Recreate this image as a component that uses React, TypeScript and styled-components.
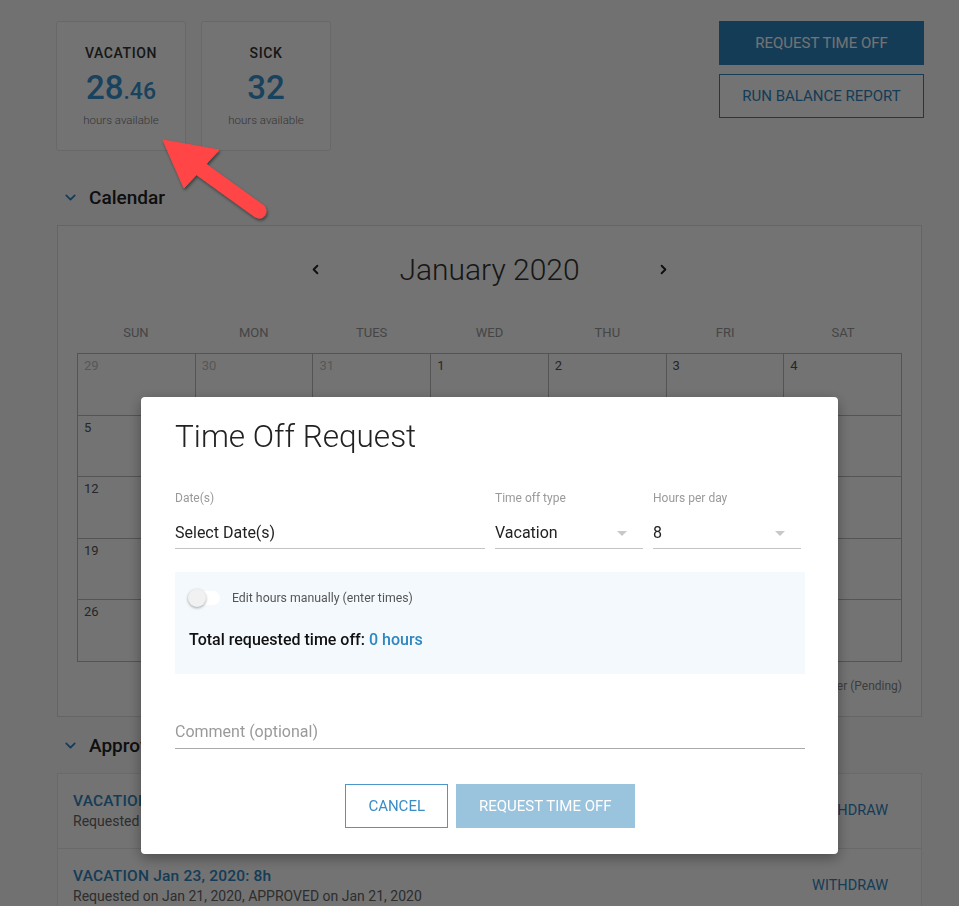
import React from "react";
import styled, { createGlobalStyle } from "styled-components";
import { ChevronDown, ChevronLeft, ChevronRight } from "lucide-react";

const PRIMARY = "#2f86c0";

const GlobalStyle = createGlobalStyle`
  body {
    margin: 0;
    background: #fafafa;
    font-family: Roboto, "Liberation Sans", Arial, sans-serif;
    color: #333;
  }
  * { box-sizing: border-box; }
`;

const Balances = [
  { id: 1, label: "Vacation", whole: "28", frac: ".46" },
  { id: 2, label: "Sick", whole: "32", frac: "" },
];

const DayNames = ["Sun", "Mon", "Tues", "Wed", "Thu", "Fri", "Sat"];

const Weeks = [
  [
    { n: 29, muted: true },
    { n: 30, muted: true },
    { n: 31, muted: true },
    { n: 1 },
    { n: 2 },
    { n: 3 },
    { n: 4 },
  ],
  [5, 6, 7, 8, 9, 10, 11].map((n) => ({ n })),
  [12, 13, 14, 15, 16, 17, 18].map((n) => ({ n })),
  [19, 20, 21, 22, 23, 24, 25].map((n) => ({ n })),
  [26, 27, 28, 29, 30, 31, 1].map((n, i) => ({ n, muted: i === 6 })),
];

const Approved = [
  {
    id: 1,
    title: "VACATION Jan 24, 2020: 8h",
    sub: "Requested on Jan 21, 2020, APPROVED on Jan 21, 2020",
  },
  {
    id: 2,
    title: "VACATION Jan 23, 2020: 8h",
    sub: "Requested on Jan 21, 2020, APPROVED on Jan 21, 2020",
  },
];

function App() {
  return (
    <>
      <GlobalStyle />
      <StPage>
        <StTopRow>
          <StCards>
            {Balances.map(({ id, label, whole, frac }) => (
              <StBalanceCard key={id}>
                <StBalanceLabel>{label}</StBalanceLabel>
                <StBalanceValue>
                  {whole}
                  {frac && <small>{frac}</small>}
                </StBalanceValue>
                <StBalanceHint>hours available</StBalanceHint>
              </StBalanceCard>
            ))}
          </StCards>
          <StActions>
            <StPageButton $filled>Request time off</StPageButton>
            <StPageButton>Run balance report</StPageButton>
          </StActions>
        </StTopRow>

        <StSectionHeader $top={32} $bottom={14}>
          <ChevronDown size={17} strokeWidth={2.5} color={PRIMARY} />
          Calendar
        </StSectionHeader>
        <StCalendarCard>
          <StMonthNav>
            <ChevronLeft size={15} strokeWidth={3} color="#222" />
            <StMonthTitle>January 2020</StMonthTitle>
            <ChevronRight size={15} strokeWidth={3} color="#222" />
          </StMonthNav>
          <StDayNames>
            {DayNames.map((d) => (
              <span key={d}>{d}</span>
            ))}
          </StDayNames>
          <StGrid>
            {Weeks.flat().map((d, i) => (
              <StCell key={i} $muted={!!d.muted}>
                {d.n}
              </StCell>
            ))}
          </StGrid>
          <StLegend>Vacation &nbsp; Sick &nbsp; Other (Pending)</StLegend>
        </StCalendarCard>

        <StSectionHeader $top={15} $bottom={13}>
          <ChevronDown size={17} strokeWidth={2.5} color={PRIMARY} />
          Approved Time Off
        </StSectionHeader>
        <StList>
          {Approved.map(({ id, title, sub }) => (
            <StListItem key={id}>
              <div>
                <StItemTitle>{title}</StItemTitle>
                <StItemSub>{sub}</StItemSub>
              </div>
              <StTextButton>Withdraw</StTextButton>
            </StListItem>
          ))}
        </StList>
      </StPage>

      <StBackdrop>
        <StModal>
          <StModalTitle>Time Off Request</StModalTitle>
          <StFields>
            <StField>
              <StFieldLabel>Date(s)</StFieldLabel>
              <StFieldValue>Select Date(s)</StFieldValue>
            </StField>
            <StField>
              <StFieldLabel>Time off type</StFieldLabel>
              <StFieldValue $select>Vacation</StFieldValue>
            </StField>
            <StField>
              <StFieldLabel>Hours per day</StFieldLabel>
              <StFieldValue $select>8</StFieldValue>
            </StField>
          </StFields>
          <StInfoBox>
            <StToggleRow>
              <StToggle>
                <span />
              </StToggle>
              Edit hours manually (enter times)
            </StToggleRow>
            <StTotal>
              Total requested time off: <em>0 hours</em>
            </StTotal>
          </StInfoBox>
          <StComment>Comment (optional)</StComment>
          <StModalButtons>
            <StModalButton>Cancel</StModalButton>
            <StModalButton $filled>Request time off</StModalButton>
          </StModalButtons>
        </StModal>
      </StBackdrop>

      <StArrow viewBox="150 128 130 100" width="130" height="100">
        <defs>
          <filter id="shadow" x="-20%" y="-20%" width="140%" height="140%">
            <feDropShadow dx="1" dy="2" stdDeviation="1.5" floodColor="#000" floodOpacity="0.45" />
          </filter>
        </defs>
        <g fill="#ff4545" stroke="#ff4545" filter="url(#shadow)">
          <path d="M163 140 L219 150 L184 188 Z" strokeWidth="1" strokeLinejoin="round" />
          <line x1="198" y1="167" x2="259" y2="211" strokeWidth="15" strokeLinecap="round" />
        </g>
      </StArrow>
    </>
  );
}

export default App;

const StPage = styled.div`
  padding: 21px 35px 40px 56px;
  min-height: 906px;
`;

const StTopRow = styled.div`
  display: flex;
  justify-content: space-between;
  align-items: flex-start;
`;

const StCards = styled.div`
  display: flex;
  gap: 15px;
`;

const StBalanceCard = styled.div`
  width: 130px;
  height: 130px;
  background: #fff;
  border: 1px solid #e6e6e6;
  border-radius: 3px;
  display: flex;
  flex-direction: column;
  align-items: center;
  padding-top: 22px;
`;

const StBalanceLabel = styled.div`
  font-size: 14px;
  font-weight: 500;
  letter-spacing: 0.6px;
  text-transform: uppercase;
  color: #333;
  line-height: 18px;
`;

const StBalanceValue = styled.div`
  font-size: 33px;
  font-weight: 500;
  color: #3592cf;
  line-height: 40px;
  height: 40px;
  margin-top: 6px;

  small {
    font-size: 23px;
  }
`;

const StBalanceHint = styled.div`
  font-size: 11.5px;
  font-weight: 300;
  color: #777;
  line-height: 14px;
  margin-top: 5px;
`;

const StActions = styled.div`
  display: flex;
  flex-direction: column;
  gap: 9px;
  width: 205px;
`;

const StPageButton = styled.button<{ $filled?: boolean }>`
  height: 44px;
  border: 1px solid ${PRIMARY};
  background: ${(p) => (p.$filled ? PRIMARY : "#fff")};
  color: ${(p) => (p.$filled ? "#fff" : PRIMARY)};
  font-family: inherit;
  font-size: 15px;
  text-transform: uppercase;
`;

const StSectionHeader = styled.h2<{ $top: number; $bottom: number }>`
  display: flex;
  align-items: center;
  gap: 10px;
  height: 28px;
  margin: ${(p) => p.$top}px 0 ${(p) => p.$bottom}px 6px;
  font-size: 19px;
  font-weight: 500;
  color: #222;
`;

const StCalendarCard = styled.div`
  background: #fff;
  border: 1px solid #e0e0e0;
  margin-left: 1px;
  margin-right: 2px;
  padding: 27px 19px 21px;
`;

const StMonthNav = styled.div`
  display: flex;
  justify-content: center;
  align-items: center;
  gap: 76px;
  height: 32px;
`;

const StMonthTitle = styled.div`
  font-size: 30px;
  font-weight: 300;
  color: #333;
`;

const StDayNames = styled.div`
  display: grid;
  grid-template-columns: repeat(7, 1fr);
  margin-top: 40px;
  height: 15px;
  font-size: 13px;
  color: #999;
  text-transform: uppercase;
  text-align: center;
  line-height: 15px;
`;

const StGrid = styled.div`
  display: grid;
  grid-template-columns: repeat(7, 1fr);
  grid-auto-rows: 61.6px;
  margin-top: 13px;
  border-top: 1px solid #bbb;
  border-left: 1px solid #bbb;
`;

const StCell = styled.div<{ $muted: boolean }>`
  border-right: 1px solid #bbb;
  border-bottom: 1px solid #bbb;
  padding: 4px 6px;
  font-size: 13px;
  color: ${(p) => (p.$muted ? "#c2c2c2" : "#555")};
`;

const StLegend = styled.div`
  text-align: right;
  font-size: 12px;
  color: #888;
  margin-top: 17px;
  height: 16px;
`;

const StList = styled.div`
  background: #fff;
  border: 1px solid #eaeaea;
  margin-left: 1px;
  margin-right: 2px;
`;

const StListItem = styled.div`
  display: flex;
  justify-content: space-between;
  align-items: center;
  height: 75px;
  padding: 0 33px 0 15px;
  border-bottom: 1px solid #e8e8e8;
`;

const StItemTitle = styled.div`
  font-size: 15.5px;
  font-weight: 500;
  color: ${PRIMARY};
  letter-spacing: 0.2px;
`;

const StItemSub = styled.div`
  font-size: 14px;
  color: #666;
  margin-top: 3px;
`;

const StTextButton = styled.button`
  border: none;
  background: none;
  font-family: inherit;
  font-size: 14.5px;
  color: ${PRIMARY};
  text-transform: uppercase;
  padding: 0;
`;

const StBackdrop = styled.div`
  position: fixed;
  inset: 0;
  background: rgba(0, 0, 0, 0.55);
  padding: 397px 0 0 141px;
`;

const StModal = styled.div`
  width: 697px;
  height: 457px;
  background: #fff;
  border-radius: 4px;
  box-shadow: 0 4px 14px rgba(0, 0, 0, 0.35);
  padding: 22px 33px 0 34px;
`;

const StModalTitle = styled.div`
  font-size: 31.5px;
  font-weight: 300;
  color: #222;
  line-height: 36px;
`;

const StFields = styled.div`
  display: grid;
  grid-template-columns: 310px 148px 148px;
  gap: 10px;
  margin-top: 36px;
`;

const StField = styled.div`
  display: flex;
  flex-direction: column;
`;

const StFieldLabel = styled.div`
  font-size: 12px;
  color: #9a9a9a;
  line-height: 14px;
`;

const StFieldValue = styled.div<{ $select?: boolean }>`
  position: relative;
  margin-top: 18px;
  padding-bottom: 5px;
  font-size: 16px;
  color: #222;
  line-height: 20px;
  border-bottom: 1.5px solid #c4c4c4;

  &::after {
    content: "";
    display: ${(p) => (p.$select ? "block" : "none")};
    position: absolute;
    right: 16px;
    top: 8px;
    border-left: 5px solid transparent;
    border-right: 5px solid transparent;
    border-top: 5px solid #c8c8c8;
  }
`;

const StInfoBox = styled.div`
  margin-top: 23px;
  height: 102px;
  background: #f4f9fd;
  padding: 17px 14px;
`;

const StToggleRow = styled.div`
  display: flex;
  align-items: center;
  gap: 12px;
  font-size: 12.3px;
  color: #555;
  height: 18px;
`;

const StToggle = styled.div`
  position: relative;
  width: 31px;
  height: 14px;
  border-radius: 7px;
  background: #fff;

  span {
    position: absolute;
    left: -1px;
    top: -2px;
    width: 18px;
    height: 18px;
    border-radius: 50%;
    background: #f1f1f1;
    box-shadow: 0 1px 3px rgba(0, 0, 0, 0.35);
  }
`;

const StTotal = styled.div`
  margin-top: 23px;
  font-size: 16px;
  font-weight: 500;
  color: #111;

  em {
    font-style: normal;
    color: ${PRIMARY};
  }
`;

const StComment = styled.div`
  margin-top: 48px;
  font-size: 16px;
  color: #9a9a9a;
  padding-bottom: 7px;
  border-bottom: 1.5px solid #aaa;
`;

const StModalButtons = styled.div`
  display: flex;
  justify-content: center;
  gap: 8px;
  margin-top: 35px;
`;

const StModalButton = styled.button<{ $filled?: boolean }>`
  height: 44px;
  padding: 0 22px;
  border: 1px solid ${(p) => (p.$filled ? "#9ac3dd" : "#4b97c9")};
  background: ${(p) => (p.$filled ? "#9ac3dd" : "#fff")};
  color: ${(p) => (p.$filled ? "#fff" : "#3a8cc4")};
  font-family: inherit;
  font-size: 15px;
  text-transform: uppercase;
`;

const StArrow = styled.svg`
  position: absolute;
  left: 150px;
  top: 128px;
  overflow: visible;
`;
